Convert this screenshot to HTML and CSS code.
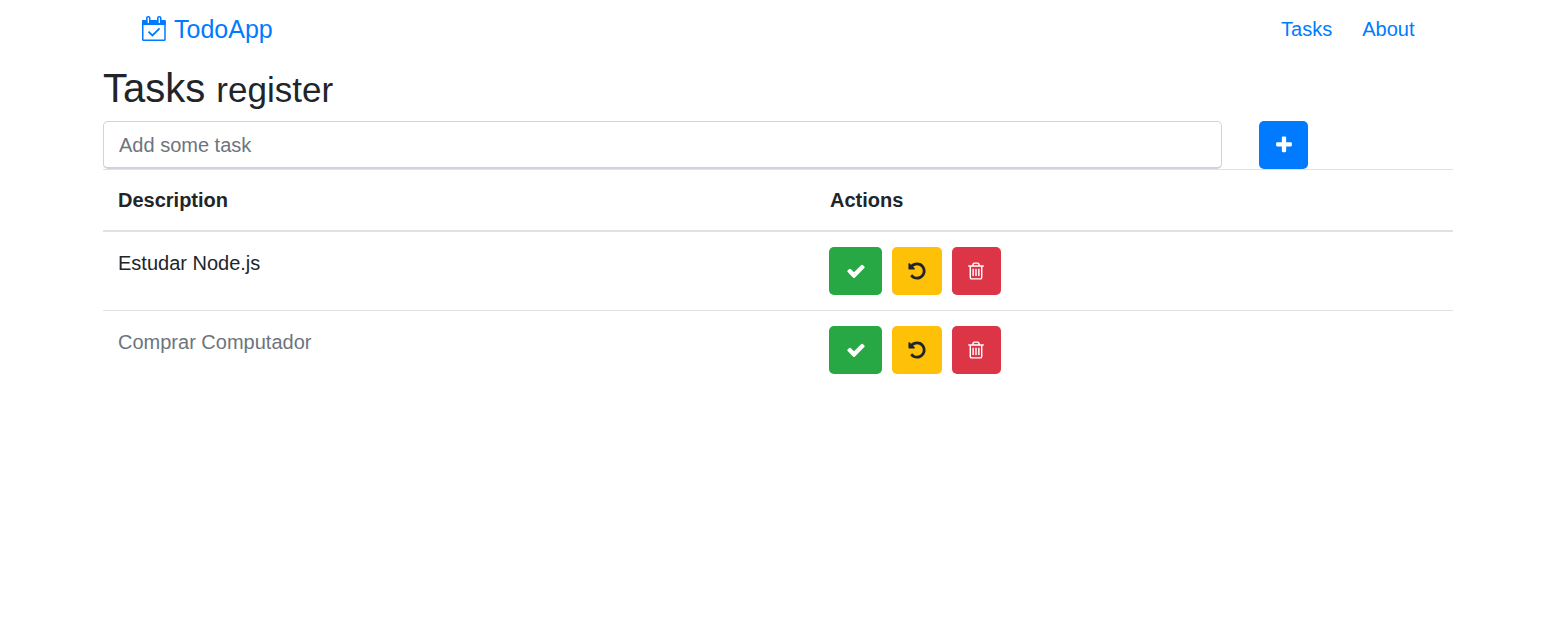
FILE: index.html
```html
<!DOCTYPE html>
<html lang="en">
<head>
<meta charset="utf-8">
<title>TodoApp</title>
<link rel="stylesheet" href="styles.css">
</head>
<body>
<svg class="sprite" aria-hidden="true">
  <symbol id="check" viewBox="0 0 1792 1792"><path d="M1671 566q0 40-28 68l-724 724-136 136q-28 28-68 28t-68-28l-136-136-362-362q-28-28-28-68t28-68l136-136q28-28 68-28t68 28l294 295 656-657q28-28 68-28t68 28l136 136q28 28 28 68z"/></symbol>
  <symbol id="plus" viewBox="0 0 1792 1792"><path d="M1600 736v192q0 40-28 68t-68 28h-416v416q0 40-28 68t-68 28h-192q-40 0-68-28t-28-68v-416h-416q-40 0-68-28t-28-68v-192q0-40 28-68t68-28h416v-416q0-40 28-68t68-28h192q40 0 68 28t28 68v416h416q40 0 68 28t28 68z"/></symbol>
  <symbol id="undo" viewBox="0 0 1792 1792"><path d="M1664 896q0 156-61 298t-164 245-245 164-298 61q-172 0-327-72.500t-264-204.500q-7-10-6.500-22.500t8.500-20.500l137-138q10-9 25-9 16 2 23 12 73 95 179 147t225 52q104 0 198.500-40.500t163.500-109.500 109.500-163.500 40.500-198.500-40.500-198.500-109.500-163.500-163.500-109.500-198.500-40.500q-98 0-188 35.500t-160 101.500l137 138q31 30 14 69-17 40-59 40h-448q-26 0-45-19t-19-45v-448q0-42 40-59 39-17 69 14l130 129q107-101 244.500-156.500t284.500-55.500q156 0 298 61t245 164 164 245 61 298z"/></symbol>
  <symbol id="trash" viewBox="0 0 1792 1792"><path d="M704 736v576q0 14-9 23t-23 9h-64q-14 0-23-9t-9-23v-576q0-14 9-23t23-9h64q14 0 23 9t9 23zm256 0v576q0 14-9 23t-23 9h-64q-14 0-23-9t-9-23v-576q0-14 9-23t23-9h64q14 0 23 9t9 23zm256 0v576q0 14-9 23t-23 9h-64q-14 0-23-9t-9-23v-576q0-14 9-23t23-9h64q14 0 23 9t9 23zm128 724v-948h-896v948q0 22 7 40.500t14.500 27 10.500 8.500h832q3 0 10.500-8.500t14.500-27 7-40.500zm-672-1076h448l-48-117q-7-9-17-11h-317q-10 2-17 11zm928 32v64q0 14-9 23t-23 9h-96v948q0 83-47 143.500t-113 60.500h-832q-66 0-113-58.500t-47-141.500v-952h-96q-14 0-23-9t-9-23v-64q0-14 9-23t23-9h309l70-167q15-37 54-63t79-26h320q40 0 79 26t54 63l70 167h309q14 0 23 9t9 23z"/></symbol>
</svg>
<div class="container">
  <nav class="navbar">
    <a class="brand">
      <svg class="calendar" viewBox="0 0 24 26">
        <rect class="page" x=".75" y="4.750" width="22.250" height="19.500" rx=".8"/>
        <rect x="0" y="4" width="23.750" height="5" rx="1"/>
        <rect x="4" y="0" width="4.500" height="8" rx="2"/>
        <rect x="15" y="0" width="4.500" height="8" rx="2"/>
        <path class="slit" d="M6.300 1.600V7M17.300 1.600V7"/>
        <path class="tick" d="M6.500 15.600l3.900 3.800 7.200-7"/>
      </svg>
      <span>TodoApp</span>
    </a>
    <div class="links"><a>Tasks</a><a>About</a></div>
  </nav>
  <h2 class="title">Tasks <small>register</small></h2>
  <div class="form">
    <input class="field" placeholder="Add some task">
    <button class="btn primary"><svg class="icon"><use href="#plus"/></svg></button>
  </div>
  <div class="table">
    <div class="row head"><div>Description</div><div>Actions</div></div>
    <div class="row">
      <div>Estudar Node.js</div>
      <div class="actions">
        <button class="btn success"><svg class="icon"><use href="#check"/></svg></button>
        <button class="btn warning"><svg class="icon"><use href="#undo"/></svg></button>
        <button class="btn danger"><svg class="icon"><use href="#trash"/></svg></button>
      </div>
    </div>
    <div class="row last">
      <div class="done">Comprar Computador</div>
      <div class="actions">
        <button class="btn success"><svg class="icon"><use href="#check"/></svg></button>
        <button class="btn warning"><svg class="icon"><use href="#undo"/></svg></button>
        <button class="btn danger"><svg class="icon"><use href="#trash"/></svg></button>
      </div>
    </div>
  </div>
</div>
</body>
</html>
```
FILE: styles.css
```css
* { box-sizing: border-box; }
body {
  margin: 0;
  background: #fff;
  color: #212529;
  font: 20px/30px "Liberation Sans", Arial, sans-serif;
}
.sprite { display: none; }
.container { width: 1350px; margin-left: 103px; }
.navbar {
  display: flex;
  align-items: center;
  justify-content: space-between;
  height: 58px;
  padding: 0 38.500px 0 39px;
  color: #007bff;
}
.brand { display: flex; align-items: center; gap: 8px; font-size: 25px; }
.brand span { margin-top: -1px; }
.calendar { width: 24px; height: 26px; fill: currentColor; }
.page { fill: none; stroke: currentColor; stroke-width: 1.5; }
.slit { stroke: #fff; stroke-width: 1.3; }
.tick { fill: none; stroke: currentColor; stroke-width: 1.8; }
.links { display: flex; gap: 30px; }
.title { margin: 6px 0 9px; height: 48px; font-size: 40px; line-height: 48px; font-weight: 400; }
.title small { font-size: 35px; line-height: 1; }
.form { display: flex; gap: 37px; height: 48px; }
.field {
  width: 1119px;
  height: 48px;
  padding: 2px 15px 0;
  border: 1px solid #ced4da;
  border-bottom-width: 2px;
  border-radius: 5px;
  background: #fff;
  font: inherit;
}
.field::placeholder { color: #6c757d; opacity: 1; }
.btn {
  display: flex;
  align-items: center;
  justify-content: center;
  height: 48px;
  padding: 0;
  border: 0;
  border-radius: 5px;
  color: #fff;
}
.icon { width: 20px; height: 20px; fill: currentColor; }
.primary { width: 49px; background: #007bff; }
.success { width: 53px; background: #28a745; }
.warning { width: 50px; background: #ffc107; color: #212529; }
.danger { width: 49px; padding-right: 1px; background: #dc3545; }
.row {
  display: grid;
  grid-template-columns: 711px 1fr;
  height: 79px;
  padding: 15px;
  border-bottom: 1px solid #dee2e6;
}
.row > div:first-child { padding-top: 1px; }
.head { height: 63px; border-top: 1px solid #dee2e6; border-bottom-width: 2px; font-weight: 700; }
.row.head > div:first-child { padding-top: 0; }
.head div:last-child { padding-left: 1px; }
.last { border-bottom: 0; }
.done { color: #6c757d; }
.actions { display: flex; gap: 10px; }
```
